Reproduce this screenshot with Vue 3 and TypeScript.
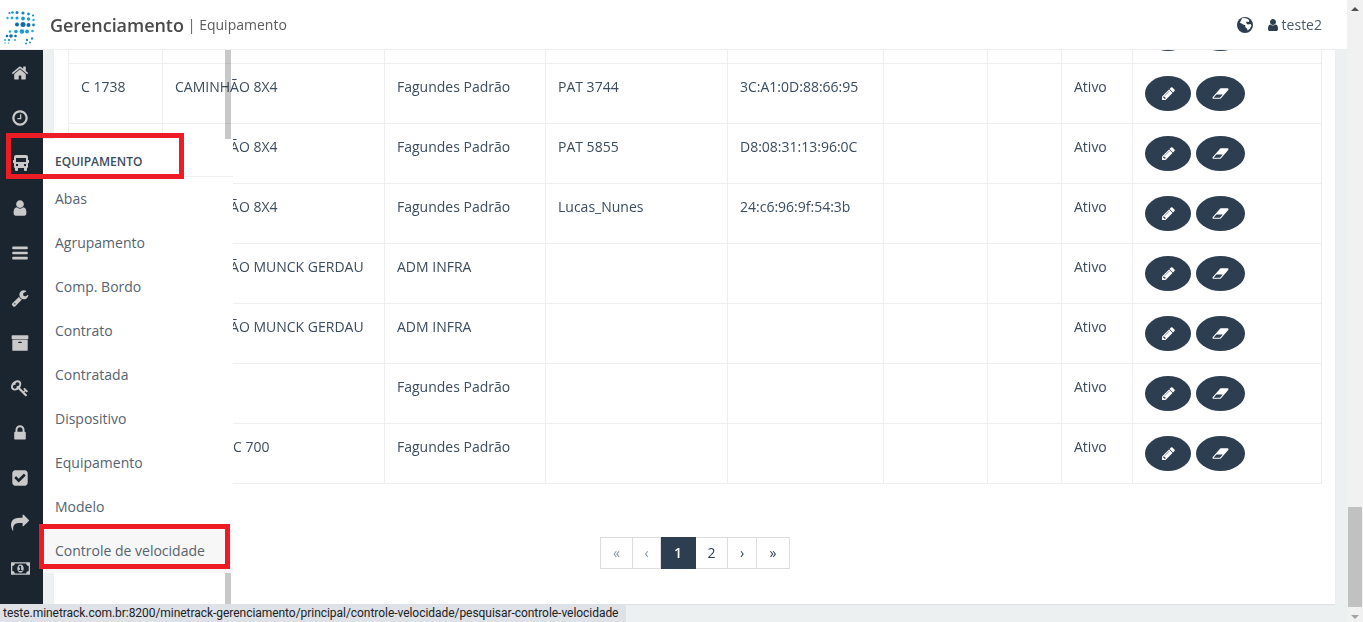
<script setup lang="ts">
interface Icon { vb: string; d: string }
const P = {
  home: 'M1472 992v480q0 26-19 45t-45 19h-384v-384h-256v384h-384q-26 0-45-19t-19-45v-480q0-1 .5-3t.5-3l575-474 575 474q1 2 1 6zm223-69l-62 74q-8 9-21 11h-3q-13 0-21-7l-692-577-692 577q-12 8-24 7-13-2-21-11l-62-74q-8-10-7-23.500t11-21.500l719-599q32-26 76-26t76 26l244 204v-195q0-14 9-23t23-9h192q14 0 23 9t9 23v408l219 182q10 8 11 21.500t-7 23.500z',
  clock: 'M1024 544v448q0 14-9 23t-23 9h-320q-14 0-23-9t-9-23v-64q0-14 9-23t23-9h224v-352q0-14 9-23t23-9h64q14 0 23 9t9 23zm416 352q0-148-73-273t-198-198-273-73-273 73-198 198-73 273 73 273 198 198 273 73 273-73 198-198 73-273zm224 0q0 209-103 385.500t-279.500 279.500-385.500 103-385.500-103-279.500-279.500-103-385.500 103-385.500 279.500-279.500 385.500-103 385.500 103 279.500 279.500 103 385.500z',
  bus: 'M3 0h10q2 0 2 2v3h1v3h-1v4q0 1-1 1v2q0 1-1 1h-1q-1 0-1-1v-2H5v2q0 1-1 1H3q-1 0-1-1v-2q-1 0-1-1V8H0V5h1V2q0-2 2-2zM3 3v4h10V3zM3 9v2h2V9zM11 9v2h2V9z',
  user: 'M1536 1399q0 109-62.500 187t-150.500 78h-854q-88 0-150.500-78t-62.500-187q0-85 8.500-160.500t31.500-152 58.500-131 94-89 134.500-34.500q131 128 313 128t313-128q76 0 134.500 34.500t94 89 58.500 131 31.500 152 8.500 160.500zm-256-887q0 159-112.500 271.500t-271.500 112.500-271.500-112.500-112.500-271.500 112.500-271.500 271.500-112.500 271.500 112.500 112.500 271.500z',
  bars: 'M1664 1344v128q0 26-19 45t-45 19h-1408q-26 0-45-19t-19-45v-128q0-26 19-45t45-19h1408q26 0 45 19t19 45zm0-512v128q0 26-19 45t-45 19h-1408q-26 0-45-19t-19-45v-128q0-26 19-45t45-19h1408q26 0 45 19t19 45zm0-512v128q0 26-19 45t-45 19h-1408q-26 0-45-19t-19-45v-128q0-26 19-45t45-19h1408q26 0 45 19t19 45z',
  wrench: 'M448 1472q0-26-19-45t-45-19-45 19-19 45 19 45 45 19 45-19 19-45zm644-420l-682 682q-37 37-90 37-52 0-91-37l-106-108q-38-36-38-90 0-53 38-91l681-681q39 98 114.500 173.500t173.500 114.500zm634-435q0 39-23 106-47 134-164.500 217.500t-258.500 83.500q-185 0-316.500-131.500t-131.500-316.500 131.500-316.500 316.500-131.500q58 0 121.500 16.500t107.500 46.500q16 11 16 28t-16 28l-293 169v224l193 107q5-3 79-48.500t135.500-81 70.500-35.500q15 0 23.500 10t8.500 25z',
  archive: 'M1088 832q0-26-19-45t-45-19h-256q-26 0-45 19t-19 45 19 45 45 19h256q26 0 45-19t19-45zm576-192v960q0 26-19 45t-45 19h-1408q-26 0-45-19t-19-45v-960q0-26 19-45t45-19h1408q26 0 45 19t19 45zm64-448v256q0 26-19 45t-45 19h-1536q-26 0-45-19t-19-45v-256q0-26 19-45t45-19h1536q26 0 45 19t19 45z',
  key: 'M832 512q0-80-56-136t-136-56-136 56-56 136q0 42 19 83-41-19-83-19-80 0-136 56t-56 136 56 136 136 56 136-56 56-136q0-42-19-83 41 19 83 19 80 0 136-56t56-136zm851 704q0 17-49 66t-66 49q-9 0-28.500-16t-36.500-33-38.500-40-24.500-26l-96 96 220 220q28 28 28 68 0 42-39 81t-81 39q-40 0-68-28l-671-671q-176 131-365 131-163 0-265.500-102.500t-102.500-265.500q0-160 95-313t248-248 313-95q163 0 265.500 102.500t102.500 265.500q0 189-131 365l355 355 96-96q-3-3-26-24.500t-40-38.500-33-36.500-16-28.500q0-17 49-66t66-49q13 0 23 10 6 6 46 44.500t82 79.500 86.500 86 73 78 28.500 41z',
  lock: 'M640 768h512v-192q0-106-75-181t-181-75-181 75-75 181v192zm832 96v576q0 40-28 68t-68 28h-960q-40 0-68-28t-28-68v-576q0-40 28-68t68-28h32v-192q0-184 132-316t316-132 316 132 132 316v192h32q40 0 68 28t28 68z',
  check: 'M813 1299l614-614q19-19 19-45t-19-45l-102-102q-19-19-45-19t-45 19l-467 467-211-211q-19-19-45-19t-45 19l-102 102q-19 19-19 45t19 45l358 358q19 19 45 19t45-19zm851-883v960q0 119-84.500 203.500t-203.500 84.500h-960q-119 0-203.500-84.500t-84.500-203.500v-960q0-119 84.500-203.500t203.500-84.500h960q119 0 203.500 84.500t84.500 203.500z',
  share: 'M1792 640q0 26-19 45l-512 512q-19 19-45 19t-45-19-19-45v-256h-224q-98 0-175.500 6t-154 21.500-133 42.500-105.500 69.500-80 101-48.500 138.500-17.500 181q0 55 5 123 0 6 2.500 23.500t2.500 26.500q0 15-8.500 25t-23.500 10q-16 0-28-17-7-9-13-22t-13.500-30-10.500-24q-127-285-127-451 0-199 53-333 162-403 875-403h224v-256q0-26 19-45t45-19 45 19l512 512q19 19 19 45z',
  money: 'M768 1152h384v-96h-128v-448h-114l-148 137 77 80q42-37 55-57h2v288h-128v96zm512-256q0 70-21 142t-59.500 134-101.500 101-138 39-138-39-101.500-101-59.500-134-21-142 21-142 59.500-134 101.500-101 138-39 138 39 101.500 101 59.500 134 21 142zm512 256v-512q-106 0-181-75t-75-181h-1152q0 106-75 181t-181 75v512q106 0 181 75t75 181h1152q0-106 75-181t181-75zm128-832v1152q0 26-19 45t-45 19h-1792q-26 0-45-19t-19-45v-1152q0-26 19-45t45-19h1792q26 0 45 19t19 45z',
  pencil: 'M491 1536l91-91-235-235-91 91v107h128v128h107zm523-928q0-22-22-22-10 0-17 7l-542 542q-7 7-7 17 0 22 22 22 10 0 17-7l542-542q7-7 7-17zm-54-192l416 416-832 832h-416v-416zm683 96q0 53-37 90l-166 166-416-416 166-165q36-38 90-38 53 0 91 38l235 234q37 39 37 91z',
  eraser: 'M960 1408l336-384h-768l-336 384h768zm1013-1077q15 34 9.500 71.500t-30.500 65.500l-896 1024q-38 44-96 44h-768q-38 0-69.500-20.500t-47.500-54.500q-15-34-9.500-71.500t30.500-65.500l896-1024q38-44 96-44h768q38 0 70 20.500t47 54.500z'
}
const sideIcons: Icon[] = [
  { vb: '0 0 1792 1792', d: P.home }, { vb: '0 0 1792 1792', d: P.clock }, { vb: '0 0 16 16', d: P.bus },
  { vb: '0 0 1792 1792', d: P.user }, { vb: '0 0 1792 1792', d: P.bars }, { vb: '0 0 1792 1792', d: P.wrench },
  { vb: '0 0 1792 1792', d: P.archive }, { vb: '0 0 1792 1792', d: P.key }, { vb: '0 0 1792 1792', d: P.lock },
  { vb: '0 0 1792 1792', d: P.check }, { vb: '0 0 1792 1792', d: P.share }, { vb: '0 0 1920 1792', d: P.money }
]
const menu = ['Abas', 'Agrupamento', 'Comp. Bordo', 'Contrato', 'Contratada', 'Dispositivo', 'Equipamento', 'Modelo', 'Controle de velocidade']
const rows = [
  ['C 1738', 'CAMINHÃO 8X4', 'Fagundes Padrão', 'PAT 3744', '3C:A1:0D:88:66:95'],
  ['', 'CAMINHÃO 8X4', 'Fagundes Padrão', 'PAT 5855', 'D8:08:31:13:96:0C'],
  ['', 'CAMINHÃO 8X4', 'Fagundes Padrão', 'Lucas_Nunes', '24:c6:96:9f:54:3b'],
  ['', 'CAMINHÃO MUNCK GERDAU', 'ADM INFRA', '', ''],
  ['', 'CAMINHÃO MUNCK GERDAU', 'ADM INFRA', '', ''],
  ['', '', 'Fagundes Padrão', '', ''],
  ['', 'BOBCAT C 700', 'Fagundes Padrão', '', '']
]
const pages = ['«', '‹', '1', '2', '›', '»']
const dots: [number, number, number, string][] = [
  [9.5, 13, 1.1, '#1c8fc9'], [12.5, 12.5, 1.3, '#1c8fc9'], [17, 12.5, 1.5, '#1581bd'], [23, 13, 1.6, '#1581bd'], [28.5, 14, 1.4, '#1c8fc9'], [33, 15.5, 1.1, '#1c8fc9'],
  [7.5, 18, 1.2, '#29a9e0'], [12, 18, 1.4, '#29a9e0'], [17, 18, 1.6, '#1c9ad6'], [23, 18.5, 1.9, '#1c9ad6'], [28.5, 19, 1.7, '#1c9ad6'], [33.5, 20, 1.2, '#29a9e0'],
  [17, 24.5, 2, '#0f6ca8'], [23, 24.5, 2.5, '#0f6ca8'], [28.5, 25, 2, '#0f6ca8'], [33.5, 25, 1.4, '#1581bd'],
  [10, 31.5, 1.3, '#29a9e0'], [16, 31.5, 1.8, '#1c9ad6'], [22, 31.5, 2.3, '#1c9ad6'], [27, 31.5, 1.9, '#1c9ad6'], [32.5, 31, 1.3, '#29a9e0'],
  [7, 36, 1.3, '#0f6ca8'], [11, 36, 1.8, '#0f6ca8'], [15.500, 36, 1.3, '#0f6ca8'],
  [5, 40, 1, '#29a9e0'], [9, 40, 1.2, '#29a9e0'], [15, 40, 1, '#29a9e0'], [27, 40, 1.2, '#1c8fc9'], [32, 38.500, 1.2, '#1c8fc9'],
  [5, 43, .8, '#56bde8'], [8.5, 43, .8, '#56bde8'], [26, 43.500, 1, '#1c8fc9'], [30, 42.500, 1, '#1c8fc9']
]
</script>

<template>
  <div class="page">
    <div class="left">
      <header class="top">
        <svg class="logo" viewBox="0 0 40 50" aria-hidden="true">
          <circle v-for="(c, i) in dots" :key="i" :cx="c[0]" :cy="c[1]" :r="c[2]" :fill="c[3]" />
        </svg>
        <span class="brand">Gerenciamento</span>
        <span class="crumb">| Equipamento</span>
        <span class="spacer"></span>
        <svg class="globe" viewBox="0 0 18 18" aria-hidden="true">
          <circle cx="9" cy="9" r="8" fill="#2c3e50" />
          <path fill="#fff" d="M6 2.300 9 2l2.800 1 1.600 1.500-.8 1.500-2-.5-.4 1.700 1.600 1.300 2.700-.6 1 1.500-1.500 3-2.300 2.200-.7-2-1.600-1.300-.2-2-2.500-1L3.800 6.500 5 4.800z" />
        </svg>
        <svg class="who" viewBox="0 0 1792 1792" aria-hidden="true"><path :d="P.user" /></svg>
        <span class="uname">teste2</span>
      </header>
      <div class="body">
        <nav class="side">
          <div v-for="(ic, i) in sideIcons" :key="i" class="side-item">
            <svg :class="['ico', 'ico' + i]" :viewBox="ic.vb" aria-hidden="true"><path :d="ic.d" /></svg>
          </div>
        </nav>
        <main class="main">
          <section class="card">
            <table class="grid">
              <colgroup>
                <col style="width:94px" /><col style="width:222px" /><col style="width:161px" /><col style="width:182px" />
                <col style="width:156px" /><col style="width:104px" /><col style="width:74px" /><col style="width:71px" /><col style="width:189px" />
              </colgroup>
              <tbody>
                <tr class="cut">
                  <td></td><td></td><td></td><td></td><td></td><td></td><td></td><td></td>
                  <td class="acts">
                    <div class="cut-box">
                      <span class="btn b1"></span><span class="btn b2"></span>
                    </div>
                  </td>
                </tr>
                <tr v-for="(r, i) in rows" :key="i">
                  <td>{{ r[0] }}</td><td>{{ r[1] }}</td><td>{{ r[2] }}</td><td>{{ r[3] }}</td><td>{{ r[4] }}</td>
                  <td></td><td></td><td>Ativo</td>
                  <td class="acts">
                    <span class="btn b1"><svg class="bi" viewBox="0 0 1792 1792" aria-hidden="true"><path :d="P.pencil" /></svg></span>
                    <span class="btn b2"><svg class="be" viewBox="0 0 2048 1792" aria-hidden="true"><path :d="P.eraser" /></svg></span>
                  </td>
                </tr>
              </tbody>
            </table>
            <ul class="pager">
              <li v-for="(p, i) in pages" :key="i" :class="['pg', 'pg' + i]">{{ p }}</li>
            </ul>
          </section>
        </main>
        <div class="thumb t1"></div>
        <div class="thumb t2"></div>
        <div class="fly">
          <div class="fly-head">EQUIPAMENTO</div>
          <a v-for="(m, i) in menu" :key="m" :class="i === 8 ? 'fly-item hover' : 'fly-item'">{{ m }}</a>
        </div>
      </div>
    </div>
    <aside class="vscroll">
      <span class="arr up"></span>
      <span class="vthumb"></span>
      <span class="arr down"></span>
    </aside>
    <div class="mark m1"></div>
    <div class="mark m2"></div>
    <div class="status">teste.minetrack.com.br:8200/minetrack-gerenciamento/principal/controle-velocidade/pesquisar-controle-velocidade</div>
  </div>
</template>

<style>
html, body { margin: 0; padding: 0; overflow: hidden; }
</style>

<style scoped>
.page {
  position: relative;
  display: flex;
  width: 1363px;
  height: 622px;
  overflow: hidden;
  background: #ecf0f1;
  font-family: "Open Sans", sans-serif;
  font-size: 14px;
  color: #2c3e50;
}
.left { flex: 1; min-width: 0; display: flex; flex-direction: column; }
.top {
  height: 49px;
  flex: none;
  background: #fff;
  border-bottom: 1px solid #eee;
  display: flex;
  align-items: center;
  padding-right: 25px;
}
.logo { width: 40px; height: 50px; flex: none; }
.brand { margin-left: 10px; font-size: 18px; font-weight: 600; color: #4a4a4a; letter-spacing: -0.05px; }
.crumb { margin-left: 4px; font-size: 14px; color: #5c5c5c; }
.spacer { flex: 1; }
.globe { width: 18px; height: 18px; margin-right: 12px; }
.who { width: 14px; height: 14px; fill: #2c3e50; margin-right: 2px; }
.uname { font-size: 14px; color: #4a5a6a; }
.body { position: relative; flex: 1; display: flex; min-height: 0; }
.side { width: 43px; flex: none; background: #1a2530; height: 554px; }
.side-item { height: 45px; display: flex; align-items: center; justify-content: center; padding-right: 3px; box-sizing: border-box; }
.ico { width: 18px; height: 18px; fill: #c9c9c9; fill-rule: evenodd; }
.ico2 { width: 16px; height: 16px; margin-left: 2px; margin-top: 1px; }
.ico11 { width: 19px; height: 19px; margin-top: 1px; }
.main { flex: 1; min-width: 0; padding: 0 12px 18px 11px; }
.card {
  height: 100%;
  box-sizing: border-box;
  background: #fff;
  box-shadow: 0 1px 1px rgba(0, 0, 0, .06);
  padding: 0 13px 0 14px;
}
.grid { border-collapse: collapse; table-layout: fixed; width: 1253px; color: #3b4c5e; }
.grid td {
  border: 1px solid #eee;
  padding: 13px 12px 11px;
  height: 35px;
  line-height: 20px;
  vertical-align: top;
  white-space: nowrap;
  overflow: hidden;
}
.grid .cut td { border-top: 0; padding: 0; height: 13px; }
.cut-box { height: 13px; overflow: hidden; padding-left: 12px; }
.cut-box .btn { margin-top: -34px; vertical-align: top; }
.grid .acts { font-size: 0; padding-top: 12px; padding-bottom: 12px; }
.grid .cut .acts { padding: 0; }
.btn {
  display: inline-flex;
  align-items: center;
  justify-content: center;
  height: 35px;
  border-radius: 50%;
  background: #2c3e50;
}
.b1 { width: 46px; margin-right: 5px; }
.b2 { width: 49px; }
.bi { width: 15px; height: 15px; fill: #fff; fill-rule: evenodd; }
.be { width: 17px; height: 15px; fill: #fff; fill-rule: evenodd; }
.pager {
  list-style: none;
  display: flex;
  justify-content: center;
  margin: 53px 0 0;
  padding: 0;
}
.pg {
  height: 30px;
  line-height: 30px;
  border: 1px solid #ddd;
  border-left-width: 0;
  text-align: center;
  color: #2c3e50;
}
.pg0 { width: 31px; border-left-width: 1px; color: #8a97a5; }
.pg1 { width: 27px; color: #8a97a5; }
.pg2 { width: 34px; background: #2c3e50; border-color: #2c3e50; color: #fff; font-weight: 600; }
.pg3 { width: 31px; }
.pg4 { width: 28px; }
.pg5 { width: 32px; }
.thumb { position: absolute; background: #c8c8c8; mix-blend-mode: multiply; }
.t1 { left: 225px; top: 0; width: 6px; height: 90px; }
.t2 { left: 225px; top: 522px; width: 6px; height: 33px; }
.fly { position: absolute; left: 43px; top: 89px; width: 190px; background: #fff; }
.fly-head {
  height: 37px;
  padding: 0 12px;
  border-bottom: 1px solid #eee;
  font-size: 12px;
  font-weight: 600;
  line-height: 46px;
  color: #3b4c5e;
}
.fly-item {
  display: block;
  height: 44px;
  line-height: 44px;
  padding: 0 12px;
  color: #55636f;
}
.fly-item.hover { background: #f7f7f7; }
.vscroll {
  position: relative;
  width: 16px;
  flex: none;
  background: #f1f1f1;
}
.vthumb { position: absolute; left: 1px; top: 507px; width: 14px; height: 100px; background: #c1c1c1; }
.arr { position: absolute; left: 4px; width: 0; height: 0; border-left: 4px solid transparent; border-right: 4px solid transparent; }
.up { top: 7px; border-bottom: 4px solid #505050; }
.down { bottom: 3px; border-top: 4px solid #a3a3a3; }
.mark { position: absolute; box-sizing: border-box; border: 5px solid #ed1c24; pointer-events: none; }
.m1 { left: 6px; top: 133px; width: 178px; height: 46px; }
.m2 { left: 39px; top: 524px; width: 191px; height: 45px; }
.status {
  position: absolute;
  left: 0;
  bottom: 0;
  width: 626px;
  height: 18px;
  box-sizing: border-box;
  padding-left: 3px;
  background: #dee1e6;
  border-top-right-radius: 4px;
  font-family: Roboto, sans-serif;
  font-size: 12px;
  letter-spacing: -0.045px;
  line-height: 18px;
  color: #202124;
  white-space: nowrap;
}
</style>
